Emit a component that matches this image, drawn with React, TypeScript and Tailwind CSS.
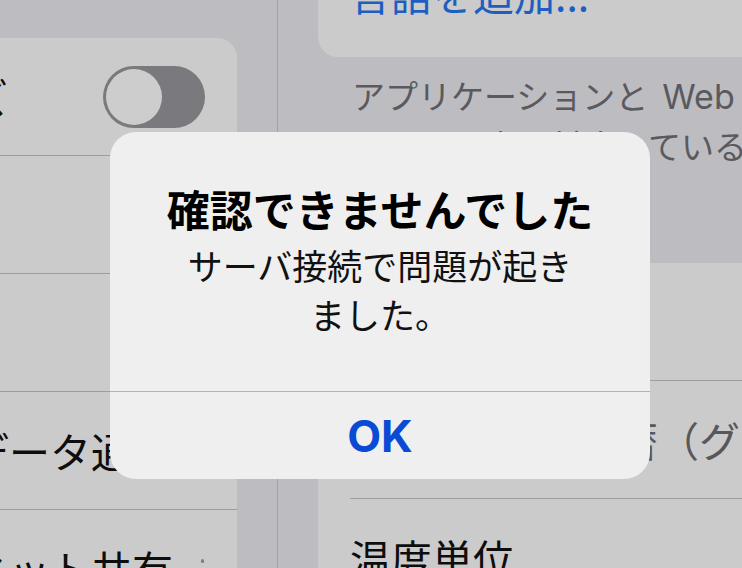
import { ReactNode } from "react";

function Toggle() {
  return (
    <div className="w-[102px] h-[62px] rounded-full bg-[#79797e] p-[3px] flex flex-none">
      <div className="w-[56px] h-[56px] rounded-full bg-[#cdcdcd]" />
    </div>
  );
}

function LeftRow({ label, right, last }: { label: string; right?: ReactNode; last?: boolean }) {
  return (
    <div className={`h-[118px] flex items-center ${last ? "" : "border-b border-[#9d9d9f]"}`}>
      <span className="-ml-[196px] whitespace-nowrap">{label}</span>
      {right && <div className="ml-auto mr-[32px] flex items-center">{right}</div>}
    </div>
  );
}

export default function App() {
  return (
    <div className="w-[742px] h-[568px] overflow-hidden relative bg-[#bdbdc1] flex font-['Noto_Sans_CJK_JP',sans-serif]">
      {/* left pane */}
      <div className="w-[278px] h-full flex-none border-r border-[#a3a3a7] pt-[38px]">
        <div className="w-[237px] bg-[#cbcbcb] rounded-tr-[20px] overflow-hidden text-[41px] text-[#0d0d0d]">
          <LeftRow label="文字サイズ" right={<Toggle />} />
          <LeftRow label="通知" />
          <LeftRow label="サウンド" />
          <LeftRow label="モバイルデータ通信" />
          <LeftRow
            label="インターネット共有"
            right={<div className="w-[3px] h-[4px] -mt-[17px] mr-[1px] rounded-full bg-[#7d7d81]" />}
            last
          />
        </div>
      </div>

      {/* right pane */}
      <div className="flex-1 min-w-0 pl-[40px] flex flex-col">
        <div className="-mt-[61px] h-[118px] flex-none bg-[#cbcbcb] rounded-bl-[20px] flex items-center pl-[32px] pb-[9px] text-[41px] text-[#1c5fc0] whitespace-nowrap">
          言語を追加...
        </div>

        <div className="h-[206px] flex-none pl-[34px] pt-[14px] text-[33px] leading-[49px] text-[#5a5a5e] whitespace-nowrap">
          <div>
            アプリケーションと<span className="font-['Inter',sans-serif] text-[34px] ml-[14px]">Web</span>
          </div>
          <div>サイトの中で対応している</div>
        </div>

        <div className="flex-1 bg-[#cbcbcb] rounded-tl-[20px] text-[41px] text-[#0d0d0d] whitespace-nowrap">
          <div className="h-[118px] pl-[32px]">
            <div className="h-full border-b border-[#9d9d9f] flex items-center">
              <span>地域</span>
            </div>
          </div>
          <div className="h-[118px] pl-[32px]">
            <div className="h-full border-b border-[#9d9d9f] flex items-center">
              <span className="w-[226px] flex-none">暦法</span>
              <span className="text-[#58585c]">西暦（グレゴリオ暦）</span>
            </div>
          </div>
          <div className="h-[118px] pl-[32px] flex items-center">温度単位</div>
        </div>
      </div>

      {/* alert */}
      <div className="absolute left-[110px] top-[132px] w-[540px] h-[347px] rounded-[26px] bg-[#efefef] flex flex-col overflow-hidden">
        <div className="h-[260px] flex-none border-b border-[#b3b3b5] flex flex-col items-center pt-[50px]">
          <div className="text-[43px] leading-[52px] font-bold text-black whitespace-nowrap">確認できませんでした</div>
          <div className="mt-[6px] text-[35px] leading-[49px] text-center text-[#111]">
            サーバ接続で問題が起き
            <br />
            ました。
          </div>
        </div>
        <div className="flex-1 flex items-center justify-center font-['Inter',sans-serif] font-bold text-[44px] text-[#0a4bd6]">
          OK
        </div>
      </div>
    </div>
  );
}
